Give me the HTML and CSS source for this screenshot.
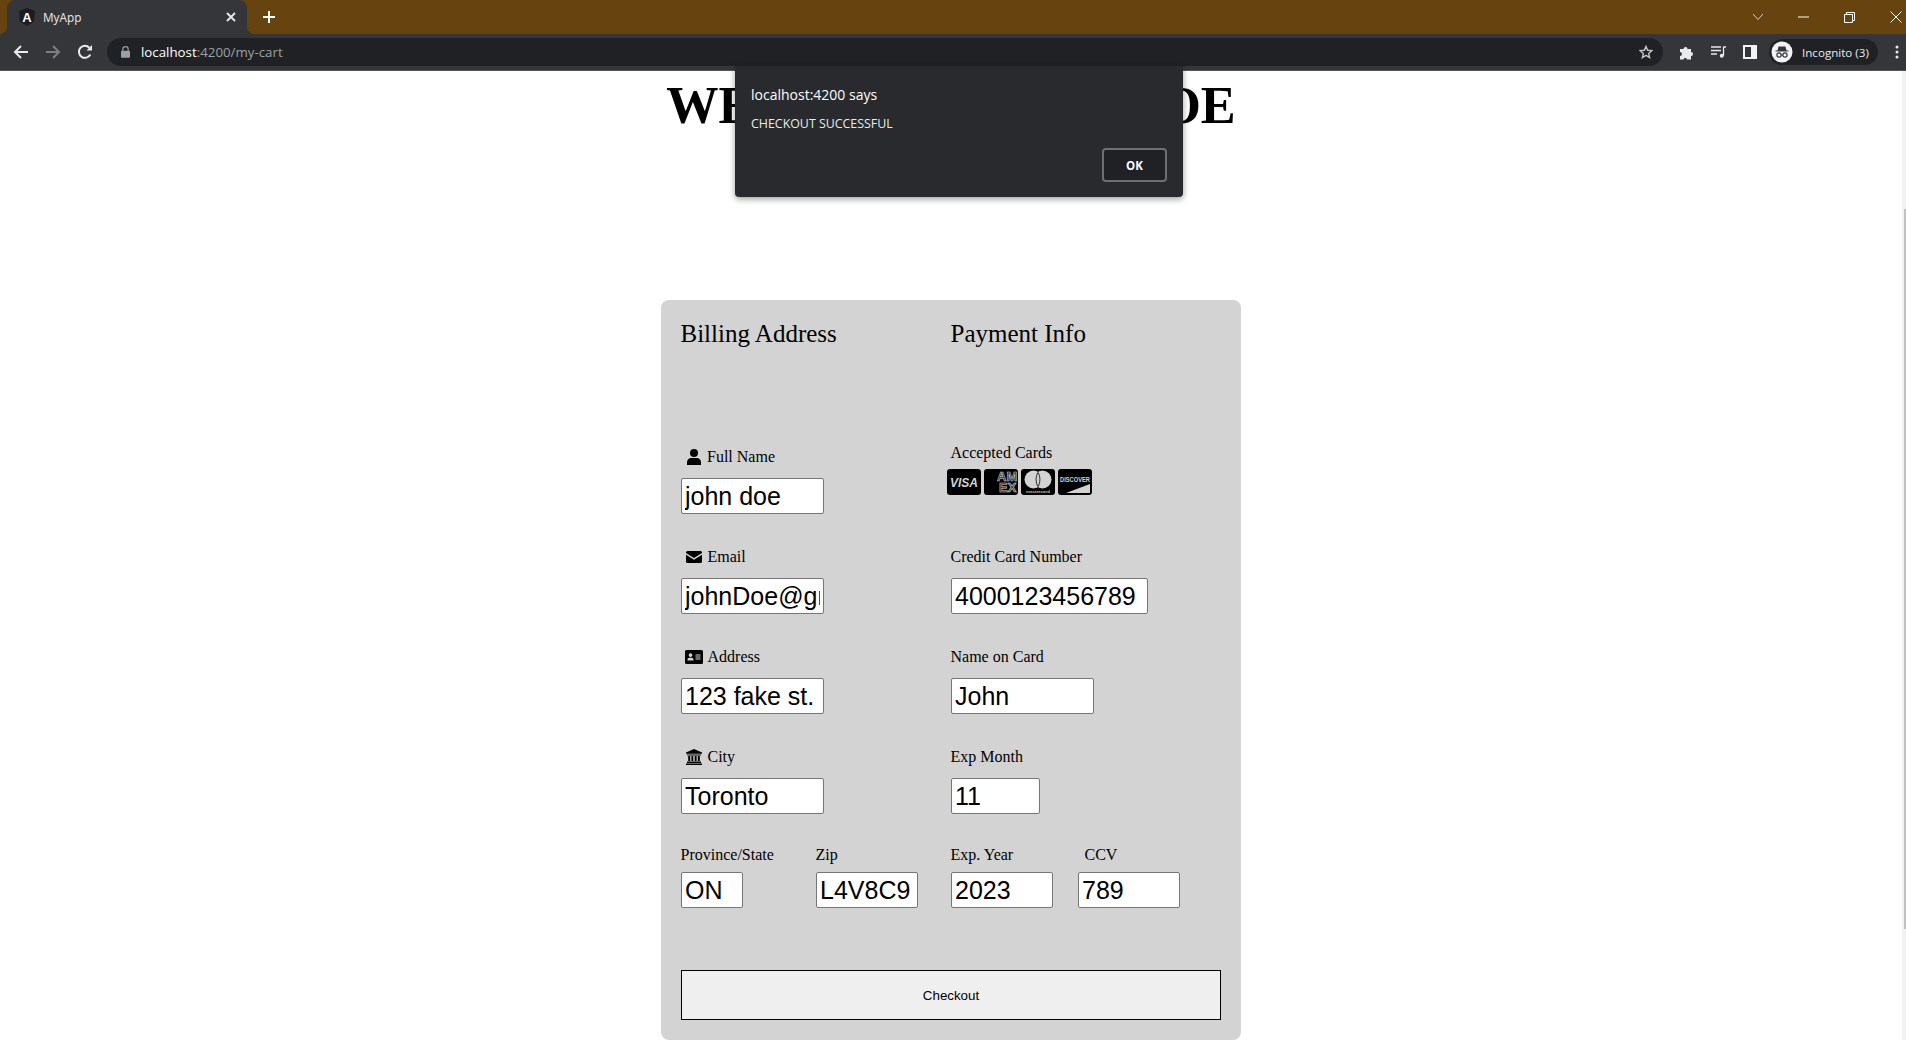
FILE: index.html
```html
<!DOCTYPE html>
<html lang="en">
  <head>
    <meta charset="UTF-8" />
    <title>MyApp</title>
    <link rel="stylesheet" href="styles.css">
  </head>
  <body>
    <header class="browser">
      <div class="tabstrip">
        <div class="tab">
          <svg class="favicon" width="18" height="18" viewBox="0 0 18 18">
            <path d="M9 0 L17 3 L16 13.5 L9 18 L2 13.5 L1 3 Z" fill="#1c1c20" />
            <text x="9" y="14" text-anchor="middle" class="favicon-letter">A</text>
          </svg>
          <span class="tab-title">MyApp</span>
          <svg class="tab-close" width="10" height="10" viewBox="0 0 10 10">
            <path d="M1 1 L9 9 M9 1 L1 9" stroke="#e8eaed" stroke-width="1.8" />
          </svg>
        </div>
        <svg class="new-tab" width="14" height="14" viewBox="0 0 14 14">
          <path d="M7 1 V13 M1 7 H13" stroke="#fff" stroke-width="2" />
        </svg>
        <div class="window-btns">
          <svg class="chevron" width="12" height="8" viewBox="0 0 12 8"><path d="M1 1 L6 6.5 L11 1" fill="none" stroke="#d9cfc0" stroke-width="1" /></svg>
          <svg width="11" height="2" viewBox="0 0 11 2"><path d="M0 1 H11" stroke="#fff" stroke-width="1" /></svg>
          <svg width="11" height="11" viewBox="0 0 11 11"><path d="M.5 2.5 H8.500 V10.500 H.5 Z M2.500 2.500 V.5 H10.500 V8.500 H8.500" fill="none" stroke="#fff" stroke-width="1" /></svg>
          <svg width="12" height="12" viewBox="0 0 12 12"><path d="M.5 .5 L11.500 11.500 M11.500 .5 L.5 11.500" stroke="#fff" stroke-width="1" /></svg>
        </div>
      </div>
      <div class="toolbar">
        <div class="nav-btns">
          <svg width="16" height="16" viewBox="0 0 16 16"><path d="M15 8 H2 M8 2 L2 8 L8 14" fill="none" stroke="#e8eaed" stroke-width="2" /></svg>
          <svg width="16" height="16" viewBox="0 0 16 16"><path d="M1 8 H14 M8 2 L14 8 L8 14" fill="none" stroke="#7d7f83" stroke-width="2" /></svg>
          <svg width="16" height="16" viewBox="0 0 16 16"><path d="M13.300 10.500 A6 6 0 1 1 12.300 3.700" fill="none" stroke="#e8eaed" stroke-width="2" /><path d="M9.500 6.500 H15 V1 Z" fill="#e8eaed" /></svg>
        </div>
        <div class="omnibox">
          <svg width="9" height="12" viewBox="0 0 9 12"><path d="M1.800 5 V3.300 A2.700 2.700 0 0 1 7.200 3.300 V5" fill="none" stroke="#9aa0a6" stroke-width="1.200" /><rect y="4.800" width="9" height="7" rx="1" fill="#9aa0a6" /></svg>
          <span class="url"><span class="url-host">localhost</span>:4200/my-cart</span>
          <svg class="star" width="14" height="14" viewBox="0 0 24 24"><path d="M12 2.500 L14.900 9 L22 9.700 L16.600 14.400 L18.200 21.400 L12 17.700 L5.800 21.400 L7.400 14.400 L2 9.700 L9.100 9 Z" fill="none" stroke="#c4c7c5" stroke-width="2.400" /></svg>
        </div>
        <div class="tools">
          <svg width="15" height="15" viewBox="0 0 15 15"><path d="M1 4 H4.500 A2 2 0 0 1 8.500 4 H12 V7 A2 2 0 0 1 12 11 V14.500 H8 A1.800 1.800 0 0 0 4.500 14.500 H1 V11 A2 2 0 0 0 1 7 Z" fill="#e8eaed" /></svg>
          <svg width="15" height="12" viewBox="0 0 15 12"><path d="M0 1 H10 M0 4.500 H10 M0 8 H6" stroke="#e8eaed" stroke-width="1.300" /><path d="M12.500 1 H15 M12.500 .5 V9.500" stroke="#e8eaed" stroke-width="1.300" fill="none" /><circle cx="10.800" cy="9.800" r="2" fill="#e8eaed" /></svg>
          <svg width="14" height="14" viewBox="0 0 14 14"><path d="M0 0 H14 V14 H0 Z M2 2 V12 H8 V2 Z" fill="#f1f3f4" fill-rule="evenodd" /></svg>
        </div>
        <div class="profile">
          <svg width="22" height="22" viewBox="0 0 22 22">
            <circle cx="11" cy="11" r="10.500" fill="#f1f3f4" />
            <path d="M7.500 5.500 H14.500 L15.500 9.500 H17.500 V10.500 H4.500 V9.500 H6.500 Z" fill="#35363a" />
            <circle cx="8" cy="14" r="2.100" fill="none" stroke="#35363a" stroke-width="1.200" />
            <circle cx="14" cy="14" r="2.100" fill="none" stroke="#35363a" stroke-width="1.200" />
            <path d="M10 14 H12" stroke="#35363a" stroke-width="1" />
          </svg>
          <span>Incognito (3)</span>
        </div>
        <svg class="kebab" width="4" height="14" viewBox="0 0 4 14"><circle cx="2" cy="2" r="1.500" fill="#e8eaed" /><circle cx="2" cy="7" r="1.500" fill="#e8eaed" /><circle cx="2" cy="12" r="1.500" fill="#e8eaed" /></svg>
      </div>
    </header>

    <div class="viewport">
      <main class="page">
        <h1>WELCOME JOHN DOE</h1>

        <form class="card">
          <div class="columns">
            <section class="col">
              <h3>Billing Address</h3>
              <div class="field">
                <label>
                  <svg class="icon icon-user" width="14" height="16" viewBox="0 0 14 16"><circle cx="7" cy="4" r="4" /><path d="M0 16 V13.500 C0 10.500 2 9 4 9 H10 C12 9 14 10.500 14 13.500 V16 Z" /></svg>
                  Full Name
                </label>
                <input type="text" class="w-143" value="john doe" />
              </div>
              <div class="field">
                <label>
                  <svg class="icon" width="16" height="12" viewBox="0 0 16 12"><path d="M1.500 0 H14.500 A1.500 1.500 0 0 1 16 1.500 V2 L8 7 L0 2 V1.500 A1.500 1.500 0 0 1 1.500 0 Z" /><path d="M0 3.800 L8 8.800 L16 3.800 V10.500 A1.500 1.500 0 0 1 14.500 12 H1.500 A1.500 1.500 0 0 1 0 10.500 Z" /></svg>
                  Email
                </label>
                <input type="text" class="w-143" value="johnDoe@gmail.com" />
              </div>
              <div class="field">
                <label>
                  <svg class="icon icon-id" width="18" height="14" viewBox="0 0 18 14"><path fill-rule="evenodd" d="M1.500 0 H16.500 A1.500 1.500 0 0 1 18 1.500 V12.500 A1.500 1.500 0 0 1 16.500 14 H1.500 A1.500 1.500 0 0 1 0 12.500 V1.500 A1.500 1.500 0 0 1 1.500 0 Z M5.500 3.300 A1.800 1.800 0 1 0 5.501 3.300 Z M2.500 10.500 H8.500 V9.500 C8.500 8.500 7.500 7.700 6.700 7.700 H4.300 C3.500 7.700 2.500 8.500 2.500 9.500 Z M10.500 4.500 V5.500 H15.500 V4.500 Z M10.500 6.500 V7.500 H15.500 V6.500 Z M10.500 8.500 V9.500 H15.500 V8.500 Z" /></svg>
                  Address
                </label>
                <input type="text" class="w-143" value="123 fake st." />
              </div>
              <div class="field">
                <label>
                  <svg class="icon" width="16" height="16" viewBox="0 0 16 16"><path d="M8 0 L16 3.500 V4.800 H0 V3.500 Z" /><path d="M1 5.500 H15 V6.500 H1 Z M2.200 7 H4.200 V12 H2.200 Z M5.400 7 H7.300 V12 H5.400 Z M8.700 7 H10.600 V12 H8.700 Z M11.800 7 H13.800 V12 H11.800 Z M1 12.500 H15 V14 H1 Z M0 14.500 H16 V16 H0 Z" /></svg>
                  City
                </label>
                <input type="text" class="w-143" value="Toronto" />
              </div>
              <div class="split">
                <div class="sub sub-left">
                  <label>Province/State</label>
                  <input type="text" class="w-62" value="ON" />
                </div>
                <div class="sub">
                  <label>Zip</label>
                  <input type="text" class="w-102" value="L4V8C9" />
                </div>
              </div>
            </section>

            <section class="col col-right">
              <h3>Payment Info</h3>
              <div class="field">
                <label class="accepted">Accepted Cards</label>
                <div class="cards">
                  <svg width="34" height="26" viewBox="0 0 34 26"><rect width="34" height="26" rx="3" /><text x="3" y="18" textLength="28" lengthAdjust="spacingAndGlyphs" class="card-visa">VISA</text></svg>
                  <svg width="34" height="26" viewBox="0 0 34 26"><rect width="34" height="26" rx="3" /><text x="13" y="11.500" class="card-amex">AM</text><text x="15" y="23" class="card-amex">EX</text></svg>
                  <svg width="34" height="26" viewBox="0 0 34 26"><rect width="34" height="26" rx="3" /><circle cx="12.500" cy="10.500" r="9" class="knock" /><circle cx="21.500" cy="10.500" r="9" class="knock" /><path d="M17 3.500 C14.500 7 14.500 14 17 17.500 C19.500 14 19.500 7 17 3.500 Z" fill="#d3d3d3" stroke="#000" stroke-width=".8" /><text x="5" y="23.500" textLength="24" lengthAdjust="spacingAndGlyphs" class="card-mc">mastercard</text></svg>
                  <svg width="34" height="26" viewBox="0 0 34 26"><rect width="34" height="26" rx="3" /><text x="2" y="13" textLength="30" lengthAdjust="spacingAndGlyphs" class="card-discover">DISCOVER</text><path d="M8 24 L32 15 V24 Z" class="knock" /></svg>
                </div>
              </div>
              <div class="field">
                <label>Credit Card Number</label>
                <input type="text" class="w-197" value="4000123456789" />
              </div>
              <div class="field">
                <label>Name on Card</label>
                <input type="text" class="w-143" value="John" />
              </div>
              <div class="field">
                <label>Exp Month</label>
                <input type="text" class="w-89" value="11" />
              </div>
              <div class="split">
                <div class="sub sub-year">
                  <label>Exp. Year</label>
                  <input type="text" class="w-102" value="2023" />
                </div>
                <div class="sub">
                  <label class="ccv">CCV</label>
                  <input type="text" class="w-102" value="789" />
                </div>
              </div>
            </section>
          </div>
          <button type="button" class="checkout">Checkout</button>
        </form>
      </main>

      <div class="scrollbar">
        <div class="scroll-thumb"></div>
      </div>

      <div class="dialog">
        <p class="dialog-origin">localhost:4200 says</p>
        <p class="dialog-msg">CHECKOUT SUCCESSFUL</p>
        <div class="dialog-actions">
          <button type="button" class="dialog-ok">OK</button>
        </div>
      </div>
    </div>
  </body>
</html>
```

FILE: styles.css
```css
* {
  box-sizing: border-box;
}

html,
body {
  height: 100%;
}

body {
  margin: 0;
  display: flex;
  flex-direction: column;
  overflow: hidden;
  background: white;
  font-family: "Liberation Serif", serif;
}

/* browser chrome */
.browser {
  height: 71px;
  flex: none;
  background: #35363a;
  border-bottom: 1px solid #54555a;
}

.tabstrip {
  height: 34px;
  display: flex;
  align-items: center;
  background: #67430f;
}

.tab {
  position: relative;
  width: 240px;
  height: 34px;
  margin-left: 7px;
  padding: 0 11px 0 11px;
  display: flex;
  align-items: center;
  background: #35363a;
  border-radius: 8px 8px 0 0;
}

/* little flares where the tab meets the toolbar */
.tab::before,
.tab::after {
  content: "";
  position: absolute;
  bottom: 0;
  width: 7px;
  height: 7px;
}

.tab::before {
  left: -7px;
  background: radial-gradient(circle at 0 0, #67430f 6.5px, #35363a 7px);
}

.tab::after {
  right: -7px;
  background: radial-gradient(circle at 100% 0, #67430f 6.5px, #35363a 7px);
}

.favicon-letter {
  font: bold 13px "Liberation Sans", sans-serif;
  fill: white;
}

.tab-title {
  flex: 1;
  margin-left: 7px;
  color: #e8eaed;
  font: 11.800px "Open Sans", sans-serif;
}

.new-tab {
  margin-left: 15px;
}

.window-btns {
  margin-left: auto;
  padding-right: 4px;
  display: flex;
  align-items: center;
  gap: 35px;
}

.chevron {
  margin-right: -1px;
}

.toolbar {
  height: 36px;
  display: flex;
  align-items: center;
}

.nav-btns {
  width: 107px;
  padding-left: 13px;
  display: flex;
  gap: 16px;
}

.omnibox {
  width: 1556px;
  height: 28px;
  padding: 0 10px 0 14px;
  display: flex;
  align-items: center;
  background: #202124;
  border-radius: 14px;
}

.url {
  flex: 1;
  margin-left: 11px;
  color: #9aa0a6;
  font: 13.300px "Open Sans", sans-serif;
}

.url-host {
  color: #fff;
}

.tools {
  margin-left: 16px;
  display: flex;
  align-items: center;
  gap: 17px;
}

.profile {
  width: 109px;
  height: 26px;
  margin-left: 12px;
  padding-left: 2px;
  display: flex;
  align-items: center;
  gap: 9px;
  background: #202124;
  border-radius: 13px;
  color: #e8eaed;
  font: 11.600px "Open Sans", sans-serif;
}

.kebab {
  margin-left: 17px;
}

/* page */
.viewport {
  position: relative;
  flex: 1;
  display: flex;
  min-height: 0;
}

.page {
  flex: 1;
  min-width: 0;
}

h1 {
  margin: 4px 0 0;
  text-align: center;
  font-size: 52.300px;
  line-height: 60px;
  font-weight: bold;
  color: black;
}

.card {
  width: 580px;
  height: 740px;
  margin: 165px auto 0;
  padding: 20px;
  background: #d3d3d3;
  border-radius: 8px;
}

.columns {
  display: grid;
  grid-template-columns: 270px 1fr;
}

.col {
  display: flex;
  flex-direction: column;
}

h3 {
  height: 94px;
  margin: 0 0 0 -0.5px;
  font-size: 25px;
  line-height: 27px;
  font-weight: normal;
  color: black;
}

.field {
  height: 100px;
  display: flex;
  flex-direction: column;
  justify-content: flex-end;
  align-items: flex-start;
}

label {
  display: flex;
  align-items: center;
  height: 18px;
  margin-bottom: 12px;
  font-size: 16px;
  color: black;
}

.col-right label,
.sub label {
  margin-left: -0.5px;
}

.icon {
  margin: 0 5.500px 0 5px;
  flex: none;
}

.icon-user {
  margin-left: 6px;
  margin-right: 6px;
}

.icon-id {
  margin-left: 4px;
  margin-right: 4.500px;
}

input {
  height: 36px;
  padding: 1px 3px;
  border: 1px solid #767676;
  border-radius: 2px;
  background: white;
  font: 25px "Liberation Sans", sans-serif;
  color: black;
}

.w-62 { width: 62px; }
.w-89 { width: 89px; }
.w-102 { width: 102px; }
.w-143 { width: 143px; }
.w-197 { width: 197px; }

.cards {
  height: 26px;
  margin: -5px 0 19px -4px;
  display: flex;
  gap: 3px;
}

.knock {
  fill: #d3d3d3;
}

.card-visa {
  font: italic bold 13.500px "Liberation Sans", sans-serif;
  fill: #d3d3d3;
}

.card-amex {
  font: bold 13px "Liberation Sans", sans-serif;
  fill: #222;
  stroke: #d3d3d3;
  stroke-width: 0.6;
}

.card-mc {
  font: bold 4px "Liberation Sans", sans-serif;
  fill: #bdbdbd;
}

.card-discover {
  font: bold 7.500px "Liberation Sans", sans-serif;
  fill: #d3d3d3;
}

.split {
  display: flex;
  height: 94px;
  align-items: flex-end;
}

.sub label {
  margin-bottom: 8px;
}

.sub-left {
  width: 135px;
}

.sub-year {
  width: 127px;
}

.ccv {
  padding-left: 7px;
}

.checkout {
  display: block;
  width: 100%;
  height: 50px;
  margin-top: 62px;
  border: 1px solid black;
  background: #efefef;
  font: 13.330px "Liberation Sans", sans-serif;
  color: black;
}

/* scrollbar */
.scrollbar {
  width: 4px;
  flex: none;
  padding-top: 138px;
  background: #f1f1f1;
}

.scroll-thumb {
  width: 2px;
  height: 720px;
  margin-left: 2px;
  background: #c1c1c1;
}

/* alert dialog, sits on top of the page */
.dialog {
  position: absolute;
  left: 735px;
  top: -5px;
  width: 448px;
  height: 131px;
  padding: 19px 16px 0;
  background: #292a2d;
  border-radius: 0 0 4px 4px;
  box-shadow: 0 2px 6px rgba(0, 0, 0, 0.4);
  color: #e8eaed;
  font-family: "Open Sans", sans-serif;
}

.dialog p {
  margin: 0;
}

.dialog-origin {
  height: 20px;
  font-size: 14px;
  line-height: 20px;
  color: #fff;
}

.dialog .dialog-msg {
  height: 20px;
  margin-top: 9px;
  font-size: 12.400px;
  line-height: 20px;
}

.dialog-actions {
  margin-top: 14px;
  display: flex;
  justify-content: flex-end;
}

.dialog-ok {
  width: 65px;
  height: 34px;
  border: 2px solid #6e6f72;
  border-radius: 4px;
  background: #202124;
  color: white;
  font: bold 11.500px "Open Sans", sans-serif;
}
```
